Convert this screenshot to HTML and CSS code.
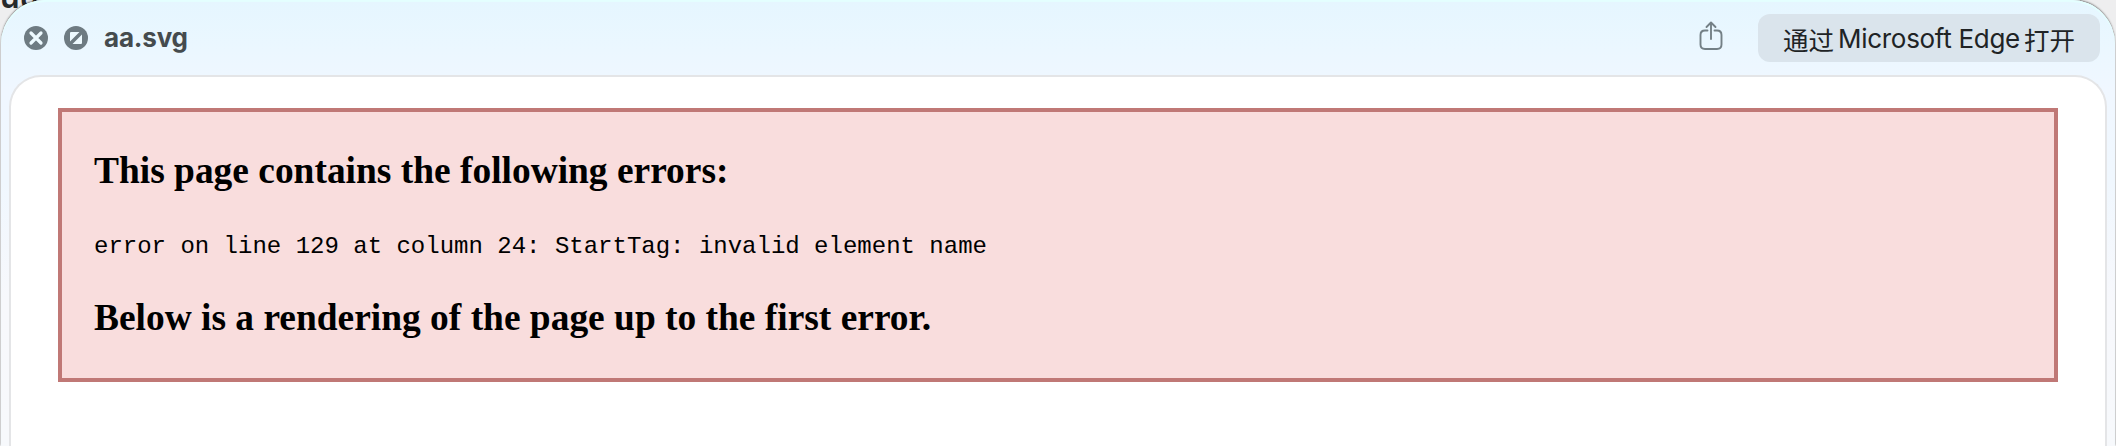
FILE: index.html
```html
<!DOCTYPE html>
<html lang="zh-CN">
<head>
<meta charset="utf-8">
<title>aa.svg</title>
<link rel="stylesheet" href="styles.css">
</head>
<body>
<div class="behind">uu</div>
<main class="window">
  <header class="toolbar">
    <svg class="control" viewBox="0 0 24 24"><circle cx="12" cy="12" r="12" fill="#6e7b82"/><path d="M7 7l10 10M17 7L7 17" stroke="#eefaff" stroke-width="3.2" stroke-linecap="round"/></svg>
    <svg class="control" viewBox="0 0 24 24"><circle cx="12" cy="12" r="12" fill="#6e7b82"/><path d="M7 6h8.500L6 15.500V7q0-1 1-1zM18 8.500V17q0 1-1 1H8.500z" fill="#eefaff"/></svg>
    <h1 class="title">aa.svg</h1>
    <svg class="share" viewBox="0 0 24 30"><path d="M8.500 9.500H6q-4.500 0-4.500 4.500v9.500q0 4.500 4.500 4.500h12q4.500 0 4.500-4.500V14Q22.500 9.500 18 9.500h-2.500M12 18V2M7.500 6L12 1.500 16.500 6" fill="none" stroke="#748086" stroke-width="1.900" stroke-linecap="round" stroke-linejoin="round"/></svg>
    <button class="open"><span class="cjk">通过</span><span class="latin">Microsoft Edge</span><span class="cjk">打开</span></button>
  </header>
  <section class="page">
    <div class="error">
      <h3 class="heading">This page contains the following errors:</h3>
      <div class="message">error on line 129 at column 24: StartTag: invalid element name</div>
      <h3 class="heading">Below is a rendering of the page up to the first error.</h3>
    </div>
  </section>
</main>
</body>
</html>
```
FILE: styles.css
```css
* { box-sizing: border-box; }
body { margin: 0; height: 446px; padding: 0 1px; overflow: hidden; background: #eeeeef; position: relative; }
.behind { position: absolute; left: 0; top: -22px; font: 600 32px/38px Inter, sans-serif; color: #26292b; }
.window {
  position: relative; height: 446px; padding: 0 8px; border-radius: 44px 44px 0 0;
  background: linear-gradient(#e5f6ff 0, #ebf7ff 50px, #f0f7ff 90px, #f0f7fe 180px, #f7f8fc 300px, #f7f9fc 446px);
  box-shadow: 0 -1px 2px rgba(0,0,0,.5), inset 0 2px 1px #e4ffff;
}
.toolbar { height: 75px; display: flex; align-items: flex-start; padding: 14px 7px 0 15px; }
.control { width: 24px; height: 24px; margin: 7px 16px 0 0; flex: none; }
.control { margin-top: 12px; }
.title { margin: 8px auto 0 0; font: 700 26px/32px Inter, sans-serif; letter-spacing: -.2px; color: #454b4e; }
.share { width: 24px; height: 30px; margin: 7px 35px 0 0; flex: none; }
.open {
  width: 342px; height: 48px; padding: 2px 0 0; border: 0; border-radius: 12px; background: #dae4ec; color: #202325;
  display: flex; align-items: center; justify-content: center; gap: 4px; font: 400 26px/46px Inter, sans-serif;
}
.latin { letter-spacing: -.3px; }
.cjk { font-family: "Noto Sans CJK SC", sans-serif; font-size: 25.500px; }
.page { height: 371px; border: 2px solid #e4e5e7; border-bottom: 0; border-radius: 32px 32px 0 0; background: #fff; padding: 31px 47px 0; }
.error { height: 274px; border: 4px solid #c07876; background: #f9dddd; padding: 37px 32px 0; color: #000; }
.heading { margin: 0; font: 700 37.440px/43px "Liberation Serif", serif; }
.message { margin: 41px 0 35px; font: 24px/28px "Liberation Mono", monospace; }
```
